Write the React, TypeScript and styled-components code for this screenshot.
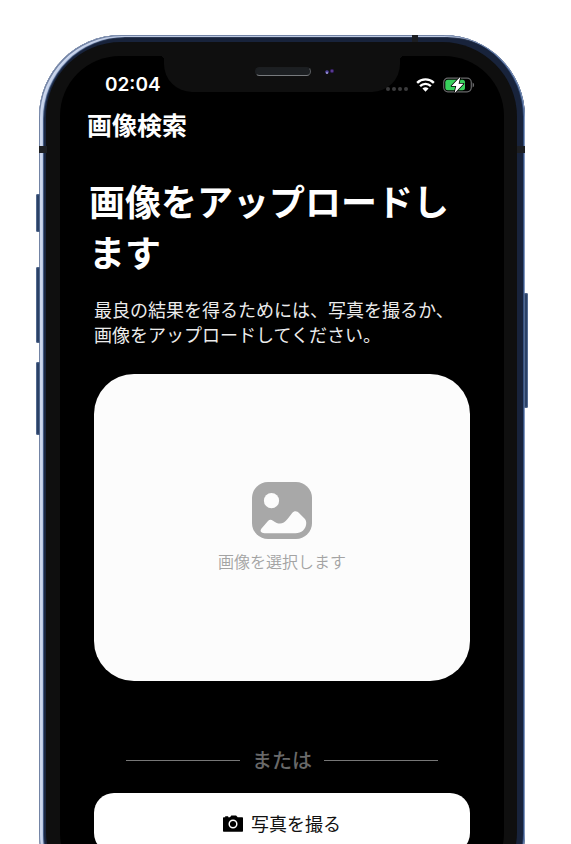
import React from "react";
import styled, { createGlobalStyle } from "styled-components";

const GlobalStyle = createGlobalStyle`
  * { box-sizing: border-box; }
  body {
    margin: 0;
    background: #fff;
    font-family: "Noto Sans CJK JP", sans-serif;
  }
  button { font: inherit; border: 0; padding: 0; cursor: pointer; }
  h1, h2, p { margin: 0; }
`;

const Stage = styled.main`
  height: 100vh;
  overflow: hidden;
  padding: 35px 46px 0 39px;
`;

const Frame = styled.div`
  position: relative;
  padding: 7px 8px 8px 7px;
  border-radius: 82px;
  background: #18233b;
  box-shadow:
    inset 1px 1px 0 #7384a5,
    inset 4px 2px 1px #cbd6ed,
    inset 5px 2px 1px #38527f,
    inset -1px 0 0 #8298c0,
    inset -2px 0 0 #35507f;
`;

const Bezel = styled.div`
  padding: 14px 13px 14px 14px;
  border-radius: 75px;
  background: #0f0f0f;
`;

const Screen = styled.div`
  position: relative;
  border-radius: 60px;
  background: #000;
  color: #fff;
  overflow: hidden;
`;

const SideKey = styled.span<{ $side: "left" | "right"; $top: number; $length: number }>`
  position: absolute;
  ${(p) => p.$side}: -3px;
  top: ${(p) => p.$top}px;
  width: 4px;
  height: ${(p) => p.$length}px;
  border-radius: 2px;
  background: #2b4166;
  box-shadow: inset 0 0 0 1px #52698f;
`;

const Antenna = styled.span<{ $edge: "left" | "right" | "top" }>`
  position: absolute;
  background: #1c1e22;
  ${(p) =>
    p.$edge === "top"
      ? "top: 0; right: 107px; width: 6px; height: 7px;"
      : `top: 111px; ${p.$edge}: 0; width: 8px; height: 7px;`}
`;

const Notch = styled.div`
  position: absolute;
  top: 0;
  left: 104px;
  right: 104px;
  height: 36px;
  border-radius: 0 0 28px 28px;
  background: #0f0f0f;

  &::before,
  &::after {
    content: "";
    position: absolute;
    top: 0;
    width: 4px;
    height: 4px;
  }
  &::before {
    right: 100%;
    background: radial-gradient(circle at 0 100%, transparent 4px, #0f0f0f 4px);
  }
  &::after {
    left: 100%;
    background: radial-gradient(circle at 100% 100%, transparent 4px, #0f0f0f 4px);
  }
`;

const Speaker = styled.span`
  position: absolute;
  top: 11px;
  left: 50%;
  width: 56px;
  height: 9px;
  margin-left: -27px;
  border-radius: 5px;
  background: #1c1f22;
  border: 1px solid #1c1e20;
  border-bottom-color: #777a7d;
  border-right-color: #5b5e61;
`;

const Lens = styled.svg`
  position: absolute;
  top: 11px;
  right: 64px;
`;

const StatusBar = styled.div`
  display: flex;
  align-items: center;
  justify-content: space-between;
  height: 56px;
  padding: 1px 29px 0 45px;
`;

const Time = styled.time`
  font: 600 19px/24px Inter, sans-serif;
`;

const Indicators = styled.div`
  position: relative;
  display: flex;
  align-items: center;
  gap: 8px;
`;

const Content = styled.div`
  padding: 0 34px 40px;
`;

const AppTitle = styled.h2`
  margin: -2px 0 0 -7px;
  font-size: 25px;
  line-height: 28px;
  font-weight: 700;
`;

const Title = styled.h1`
  margin: 37px 0 0 -5px;
  font-size: 36px;
  line-height: 51px;
  font-weight: 700;
`;

const Hint = styled.p`
  margin-top: 20px;
  font-size: 18px;
  line-height: 25px;
  font-weight: 400;
  color: #ececec;
`;

const DropArea = styled.button`
  display: flex;
  flex-direction: column;
  align-items: center;
  justify-content: center;
  gap: 10px;
  width: 100%;
  height: 307px;
  margin-top: 27px;
  border-radius: 40px;
  background: #fcfcfc;
`;

const Caption = styled.span`
  font-size: 16px;
  line-height: 24px;
  font-weight: 350;
  color: #a3a3a3;
`;

const Divider = styled.div`
  display: flex;
  align-items: center;
  gap: 12px;
  margin: 63px 32px 17px;
  font-size: 20px;
  line-height: 32px;
  font-weight: 500;
  color: #696969;

  &::before,
  &::after {
    content: "";
    flex: 1;
    height: 1px;
    background: #777;
  }
`;

const PhotoButton = styled.button`
  display: flex;
  align-items: center;
  justify-content: center;
  gap: 8px;
  width: 100%;
  height: 60px;
  border-radius: 20px;
  background: #fff;
  color: #111;

  && {
    font-size: 18px;
    line-height: 26px;
  }
`;

function SignalDots() {
  return (
    <svg width="22" height="20" viewBox="0 0 22 20" fill="#3b3b3d" aria-hidden="true">
      {[2, 8, 14, 20].map((x) => (
        <circle key={x} cx={x} cy="14" r="2" />
      ))}
    </svg>
  );
}

function WifiIcon() {
  return (
    <svg width="19" height="16" viewBox="0 0 20 16" fill="none" stroke="#fff" strokeWidth="2.5" aria-hidden="true">
      <path d="M1.2 5.7a12.6 12.6 0 0 1 17.6 0" />
      <path d="M4.3 9.1a8.2 8.2 0 0 1 11.4 0" />
      <path d="M10 15 6.8 11.8a4.6 4.6 0 0 1 6.4 0Z" fill="#fff" stroke="none" />
    </svg>
  );
}

function BatteryIcon() {
  return (
    <svg width="32" height="18" viewBox="0 0 32 18" aria-hidden="true">
      <rect x="0.7" y="2.2" width="27.6" height="13.6" rx="4.2" fill="none" stroke="#68686a" strokeWidth="1.2" />
      <path d="M29.6 6.5c2 .8 2 4.2 0 5Z" fill="#68686a" />
      <rect x="2.3" y="3.8" width="19.7" height="10.4" rx="2.5" fill="#38d15c" />
      <path
        d="M17.4.8 8.5 10h4.7l-1.7 7.2 9-9.4h-4.9Z"
        fill="#fff"
        stroke="#000"
        strokeWidth="1.6"
        paintOrder="stroke"
        strokeLinejoin="round"
      />
    </svg>
  );
}

function PictureIcon() {
  return (
    <svg width="60" height="57" viewBox="0 0 60 57" aria-hidden="true">
      <rect width="60" height="57" rx="16" fill="#a8a8a8" />
      <circle cx="19.5" cy="18.7" r="7.6" fill="#fcfcfc" />
      <path
        d="M9.500 46.500 16 39C17.500 37.300 19 37.200 21 38.700C27 43 31 42.500 35.500 37L40 31.200C42.500 28.300 45 28.700 47.500 31.500L52.500 36.500C54 38 54.400 39.500 54.200 42C53.600 47.500 49.500 51.200 43.500 51.200H12.500C9 51.200 7.500 49 9.500 46.500Z"
        fill="#fcfcfc"
      />
    </svg>
  );
}

function CameraIcon() {
  return (
    <svg width="20" height="17" viewBox="0 0 20 17" aria-hidden="true">
      <path
        d="M1 2.200h1.200V1.300h3v.9h1.800L8.300.4h4.800l1.600 1.800H19c.7 0 1 .3 1 1v12.500c0 .7-.3 1-1 1H1c-.7 0-1-.3-1-1V3.200c0-.7.3-1 1-1Z"
        fill="#000"
      />
      <circle cx="10" cy="9" r="3.800" fill="none" stroke="#fff" strokeWidth="1.500" />
    </svg>
  );
}

export default function App() {
  return (
    <>
      <GlobalStyle />
      <Stage>
        <Frame>
          <SideKey $side="left" $top={159} $length={38} />
          <SideKey $side="left" $top={232} $length={76} />
          <SideKey $side="left" $top={327} $length={73} />
          <SideKey $side="right" $top={258} $length={115} />
          <Antenna $edge="left" />
          <Antenna $edge="right" />
          <Antenna $edge="top" />
          <Bezel>
            <Screen>
              <Notch>
                <Speaker />
                <Lens width="12" height="9" viewBox="0 0 12 9" aria-hidden="true">
                  <circle cx="3" cy="5" r="1.800" fill="#5145a0" />
                  <circle cx="3" cy="6" r="0.900" fill="#aaa4dd" />
                  <circle cx="8" cy="4" r="2" fill="#392067" />
                  <circle cx="8" cy="4" r="0.900" fill="#6947a8" />
                </Lens>
              </Notch>
              <StatusBar>
                <Time>02:04</Time>
                <Indicators>
                  <SignalDots />
                  <WifiIcon />
                  <BatteryIcon />
                </Indicators>
              </StatusBar>
              <Content>
                <AppTitle>画像検索</AppTitle>
                <Title>画像をアップロードします</Title>
                <Hint>最良の結果を得るためには、写真を撮るか、画像をアップロードしてください。</Hint>
                <DropArea type="button">
                  <PictureIcon />
                  <Caption>画像を選択します</Caption>
                </DropArea>
                <Divider>または</Divider>
                <PhotoButton type="button">
                  <CameraIcon />
                  写真を撮る
                </PhotoButton>
              </Content>
            </Screen>
          </Bezel>
        </Frame>
      </Stage>
    </>
  );
}
